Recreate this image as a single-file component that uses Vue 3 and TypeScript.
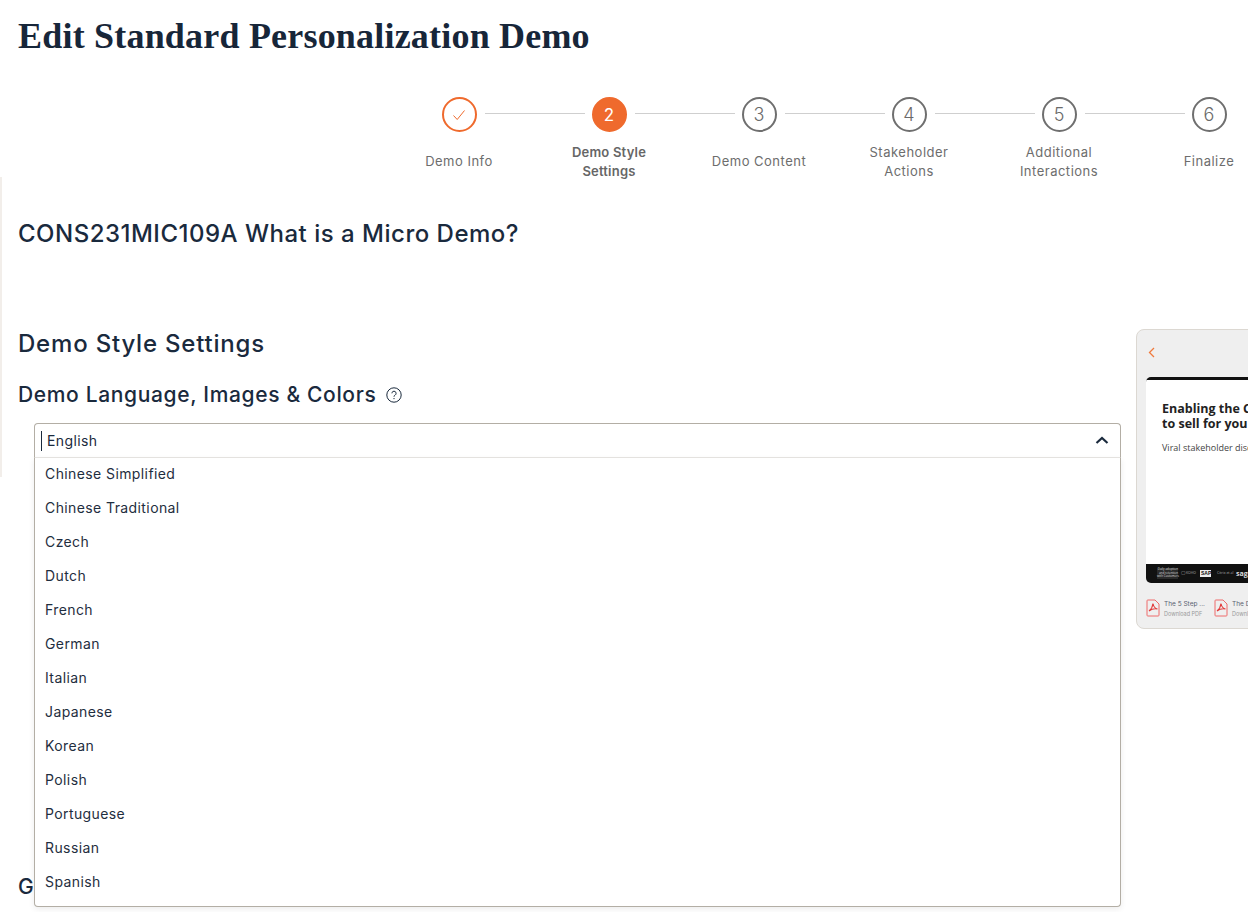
<script setup lang="ts">
const steps = [
  { n: '2', label: ['Demo Style', 'Settings'], state: 'active' },
  { n: '3', label: ['Demo Content'], state: '' },
  { n: '4', label: ['Stakeholder', 'Actions'], state: '' },
  { n: '5', label: ['Additional', 'Interactions'], state: '' },
  { n: '6', label: ['Finalize'], state: '' },
]
const languages = ['Chinese Simplified', 'Chinese Traditional', 'Czech', 'Dutch', 'French', 'German', 'Italian', 'Japanese', 'Korean', 'Polish', 'Portuguese', 'Russian', 'Spanish']
</script>

<template>
  <div class="page">
    <div class="edge"></div>
    <h1 class="title">Edit Standard Personalization Demo</h1>

    <div class="stepper">
      <div class="step">
        <div class="track">
          <div class="circle done">
            <svg width="14" height="14" viewBox="0 0 14 14" fill="none"><path d="M1.5 7.5 5.2 11.5 12.5 2.5" stroke="#ef6a2d" stroke-width="1"/></svg>
          </div>
          <div class="line"></div>
        </div>
        <div class="label"><span>Demo Info</span></div>
      </div>
      <div v-for="(s, i) in steps" :key="s.n" class="step" :class="s.state">
        <div class="track">
          <div class="circle">{{ s.n }}</div>
          <div v-if="i < steps.length - 1" class="line"></div>
        </div>
        <div class="label"><span v-for="l in s.label" :key="l">{{ l }}</span></div>
      </div>
    </div>

    <h2 class="demo-name">CONS231MIC109A What is a Micro Demo?</h2>

    <div class="content">
      <div class="form">
        <h2 class="section">Demo Style Settings</h2>
        <h3 class="sub">
          Demo Language, Images &amp; Colors
          <svg class="help" width="16" height="16" viewBox="0 0 16 16" fill="none">
            <circle cx="8" cy="8" r="7.2" stroke="#1a2a3d" stroke-width="1"/>
            <path d="M5.9 6.3a2.1 2.1 0 1 1 3.2 1.8c-.7.4-1.1.8-1.1 1.6" stroke="#1a2a3d" stroke-width="1"/>
            <circle cx="8" cy="11.6" r=".7" fill="#1a2a3d"/>
          </svg>
        </h3>
        <div class="select">
          <div class="control">
            <span class="caret"></span>
            <span class="value">English</span>
            <svg class="chev" width="14" height="9" viewBox="0 0 14 9" fill="none"><path d="M1.5 7 7 2l5.5 5" stroke="#1a2a3d" stroke-width="2.2"/></svg>
          </div>
          <ul class="menu">
            <li v-for="l in languages" :key="l">{{ l }}</li>
          </ul>
        </div>
        <h3 class="sub next">General Settings</h3>
      </div>

      <aside class="preview">
        <div class="preview-top">
          <svg width="7" height="11" viewBox="0 0 7 11" fill="none"><path d="M6 1 1.500 5.500 6 10" stroke="#f07a3c" stroke-width="1.300"/></svg>
        </div>
        <div class="slide">
          <div class="slide-body">
            <div class="slide-title">Enabling the Customer<br>to sell for you</div>
            <div class="slide-text">Viral stakeholder discovery</div>
          </div>
          <div class="slide-foot">
            <span class="foot-a">Daily adoption<br>and retention<br>with Customers</span>
            <span class="foot-b">◯ KOHO</span>
            <span class="foot-c">SAP</span>
            <span class="foot-b wide">Citrix et al</span>
            <span class="foot-d">sage</span>
          </div>
        </div>
        <div class="files">
          <div v-for="f in ['The 5 Step ...', 'The Demo ...']" :key="f" class="file">
            <svg width="14" height="18" viewBox="0 0 14 18" fill="none">
              <path d="M1 1.8A.8.8 0 0 1 1.8 1H9l4 4v11.2a.8.8 0 0 1-.8.8H1.8a.8.8 0 0 1-.8-.8V1.8Z" stroke="#ee6a6a" stroke-width="1"/>
              <path d="M7 4.500c-.3 2.500-1.500 5.500-4 7.500 2-1.500 6-2.500 8.500-2-2-.5-4-3-4.500-5.500Z" stroke="#e23b3b" stroke-width="1.100"/>
            </svg>
            <div class="file-text">
              <div class="file-name">{{ f }}</div>
              <div class="file-sub">Download PDF</div>
            </div>
          </div>
        </div>
      </aside>
    </div>
  </div>
</template>

<style>
html, body { margin: 0; background: #fff; overflow: hidden; }
</style>

<style scoped>
.page {
  position: relative;
  width: 1248px;
  height: 912px;
  overflow: hidden;
  background: #fff;
  color: #1a2a3d;
  font-family: Inter, "Noto Sans", sans-serif;
  box-sizing: border-box;
  padding-left: 18px;
}
.edge { position: absolute; left: 0; top: 177px; width: 2px; height: 300px; background: #f2eeea; }
.title {
  margin: 0;
  padding-top: 14px;
  font: 700 36px/44px "Liberation Serif", serif;
  letter-spacing: 0.2px;
  color: #172639;
}
.stepper { display: flex; margin: 39px 0 0 366px; width: 900px; }
.step { width: 150px; flex: none; display: flex; flex-direction: column; align-items: center; }
.track { position: relative; width: 35px; height: 35px; }
.circle {
  box-sizing: border-box;
  width: 35px; height: 35px;
  border-radius: 50%;
  border: 2px solid #6f6f6f;
  display: flex; align-items: center; justify-content: center;
  font-size: 18px; font-weight: 300; color: #6a6a6a;
}
.circle.done { border-color: #ef6a2d; }
.active .circle { background: #ef6a2d; border-color: #ef6a2d; color: #fff; font-size: 17px; font-weight: 400; }
.line { position: absolute; left: 43px; top: 16px; width: 100px; height: 1px; background: #cfcfcf; }
.label {
  height: 38px; margin-top: 11px;
  display: flex; flex-direction: column; align-items: center; justify-content: center;
  font-size: 13px; line-height: 19px; color: #6d6d6d; white-space: nowrap; letter-spacing: 0.5px;
}
.label span:only-child { margin-bottom: 2px; }
.active .label { font-weight: 600; color: #666; letter-spacing: 0.2px; }
.demo-name { margin: 37px 0 0; font-size: 24px; line-height: 32px; font-weight: 500; color: #1a2a3d; letter-spacing: 0.5px; }
.content { display: flex; margin-top: 78px; align-items: flex-start; }
.form { width: 1103px; flex: none; }
.section { margin: 0; font-size: 24px; line-height: 32px; font-weight: 500; letter-spacing: 0.8px; }
.sub { margin: 21px 0 0; font-size: 21px; line-height: 28px; font-weight: 500; display: flex; align-items: center; gap: 10px; letter-spacing: 0.65px; }
.help { flex: none; }
.select { position: relative; margin: 14px 0 0 16px; width: 1087px; }
.control {
  box-sizing: border-box;
  height: 35px;
  border: 1px solid #b3aea5; border-bottom: 1px solid #e8e6e3;
  border-radius: 4px 4px 0 0;
  display: flex; align-items: center;
  padding: 0 11px 0 6px;
  font-size: 14px; background: #fff;
}
.caret { width: 1px; height: 20px; background: #1a2a3d; margin-right: 5px; }
.value { flex: 1; letter-spacing: 0.4px; }
.menu {
  position: absolute; left: 0; right: 0; top: 35px; z-index: 2;
  box-sizing: border-box; height: 449px;
  margin: 0; padding: 0; list-style: none;
  background: #fff;
  border: 1px solid #b3aea5; border-top: 0;
  border-radius: 0 0 4px 4px;
  box-shadow: 0 2px 6px rgba(0,0,0,.08);
}
.menu li { height: 34px; line-height: 32px; padding-left: 10px; font-size: 14px; letter-spacing: 0.4px; color: #1f2e40; }
.sub.next { margin: 415px 0 0; }
.preview {
  box-sizing: border-box; flex: none;
  width: 300px; height: 300px;
  margin: 1px 0 0 15px;
  background: #efefef;
  border: 1px solid #dcd8d2;
  border-radius: 8px;
  padding: 0 0 0 9px;
}
.preview-top { height: 47px; display: flex; align-items: center; padding: 0 0 2px 2px; box-sizing: border-box; }
.slide { width: 400px; height: 206px; border-radius: 5px; overflow: hidden; background: #111; padding-top: 3px; box-sizing: border-box; display: flex; flex-direction: column; }
.slide-body { flex: 1; background: #fff; padding: 21px 16px; }
.slide-title { font: 700 12.5px/15px "Open Sans", sans-serif; color: #222; }
.slide-text { font: 400 9px/14px "Open Sans", sans-serif; color: #444; margin-top: 10px; }
.slide-foot { height: 19px; display: flex; align-items: center; padding-left: 11px; color: #ccc; font: 400 3px/1.15 "Open Sans", sans-serif; }
.foot-a { width: 21px; flex: none; text-align: right; color: #ddd; white-space: nowrap; margin-right: 3px; background: #2a2a2a; }
.foot-b { width: 14px; flex: none; color: #aaa; font-size: 3.5px; white-space: nowrap; margin-right: 5px; }
.foot-c { width: 11px; flex: none; box-sizing: border-box; background: #eee; color: #111; font: 700 5px/7px "Liberation Sans", sans-serif; padding: 0 1px; margin-right: 6px; }
.foot-d { color: #ddd; font: 700 7px/1 "Open Sans", sans-serif; }
.files { display: flex; gap: 9px; margin-top: 14px; }
.file { display: flex; width: 59px; flex: none; gap: 4px; align-items: center; }
.file svg { flex: none; }
.file-text { white-space: nowrap; padding-top: 2px; }
.file-name { font-size: 6.5px; line-height: 10px; color: #5a6270; }
.file-sub { font-size: 5.5px; line-height: 8px; color: #9a9a9a; margin-top: 1px; }
</style>
